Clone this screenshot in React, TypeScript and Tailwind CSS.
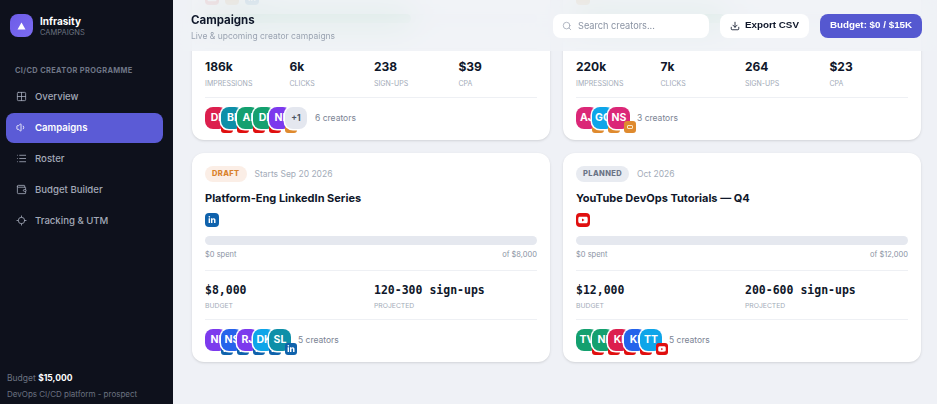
import { Download, Grid2x2, List, Locate, Search, Volume1, Wallet } from "lucide-react";
import { FaLinkedinIn, FaYoutube } from "react-icons/fa";

type Platform = "yt" | "li" | "nl";

type Creator = {
  initials: string;
  color: string;
  platform: Platform;
};

const navItems = [
  { label: "Overview", icon: Grid2x2 },
  { label: "Campaigns", icon: Volume1, active: true },
  { label: "Roster", icon: List },
  { label: "Budget Builder", icon: Wallet },
  { label: "Tracking & UTM", icon: Locate },
];

function PlatformIcon({ platform, small }: { platform: Platform; small?: boolean }) {
  const box = small ? "w-3 h-3 rounded-[3px]" : "w-3.5 h-3.5 rounded-[4px]";
  if (platform === "yt") {
    return (
      <span className={`${box} bg-[#e00f0f] flex items-center justify-center text-white`}>
        <FaYoutube className={small ? "w-2 h-2" : "w-2.5 h-2.5"} />
      </span>
    );
  }
  if (platform === "li") {
    return (
      <span className={`${box} bg-[#0f62ac] flex items-center justify-center text-white`}>
        <FaLinkedinIn className="w-2 h-2" />
      </span>
    );
  }
  return (
    <span className={`${box} bg-[#df8a2e] flex items-center justify-center`}>
      <span className="w-1.5 h-1 rounded-[1px] border border-[#fbe3c0]"></span>
    </span>
  );
}

function Avatars({ creators, extra, count }: { creators: Creator[]; extra?: string; count: number }) {
  return (
    <div className="flex items-center mt-[9px]">
      <div className="flex">
        {creators.map((c, i) => (
          <div key={i} className={`relative w-[22px] h-[22px] ${i > 0 ? "-ml-1.5" : ""}`}>
            <div
              className={`w-full h-full rounded-lg ring-[1.5px] ring-white flex items-center justify-center text-[10.5px] font-bold text-white ${c.color}`}
            >
              {c.initials}
            </div>
            <div className="absolute -right-1.5 -bottom-1 flex">
              <PlatformIcon platform={c.platform} small />
            </div>
          </div>
        ))}
        {extra && (
          <div className="relative -ml-1.5 w-[22px] h-[22px] rounded-lg ring-[1.5px] ring-white bg-[#e4e7ef] flex items-center justify-center text-[8.5px] font-bold text-[#4b5563]">
            {extra}
          </div>
        )}
      </div>
      <span className={`${extra ? "ml-2" : "ml-[7px]"} text-[8.5px] text-[#7b8494]`}>{count} creators</span>
    </div>
  );
}

function Stats({ stats }: { stats: [string, string][] }) {
  return (
    <div className="grid grid-cols-4 gap-1.5 mt-2.5">
      {stats.map(([value, label]) => (
        <div key={label}>
          <div className="text-[12px] leading-4 font-bold text-[#0f172a]">{value}</div>
          <div className="text-[7px] leading-[10px] mt-1 uppercase text-[#a3abb8]">{label}</div>
        </div>
      ))}
    </div>
  );
}

function LiveCard({
  platforms,
  fill,
  stats,
  creators,
  extra,
  count,
}: {
  platforms: Platform[];
  fill: string;
  stats: [string, string][];
  creators: Creator[];
  extra?: string;
  count: number;
}) {
  return (
    <div className="bg-white rounded-xl px-[13px] pt-[13px] pb-[11px] shadow-sm">
      <div className="flex gap-1.5">
        {platforms.map((p, i) => (
          <PlatformIcon key={i} platform={p} />
        ))}
      </div>
      <div className="mt-[9px] h-[9px] rounded-full bg-[#e5e8ef] overflow-hidden">
        <div className={`h-full bg-[#16a34a] rounded-full ${fill}`}></div>
      </div>
      <div className="mt-[5px] h-2.5"></div>
      <div className="mt-2.5 h-px bg-[#eef0f4]"></div>
      <Stats stats={stats} />
      <div className="mt-2 h-px bg-[#eef0f4]"></div>
      <Avatars creators={creators} extra={extra} count={count} />
    </div>
  );
}

function PlannedCard({
  status,
  statusClass,
  date,
  title,
  platform,
  budget,
  projected,
  creators,
}: {
  status: string;
  statusClass: string;
  date: string;
  title: string;
  platform: Platform;
  budget: string;
  projected: string;
  creators: Creator[];
}) {
  return (
    <div className="bg-white rounded-xl px-[13px] pt-[13px] pb-[11px] shadow-sm">
      <div className="flex items-center gap-2">
        <span className={`h-4 px-[7px] rounded-full flex items-center text-[7.5px] font-extrabold tracking-wider ${statusClass}`}>
          {status}
        </span>
        <span className="text-[8.5px] text-[#a3abb8]">{date}</span>
      </div>
      <div className="mt-2 text-[11px] leading-4 font-bold text-[#0f172a]">{title}</div>
      <div className="mt-[7px] flex">
        <PlatformIcon platform={platform} />
      </div>
      <div className="mt-[9px] h-[9px] rounded-full bg-[#e5e8ef]"></div>
      <div className="mt-[5px] flex justify-between text-[7.5px] leading-[10px] text-[#8a93a3]">
        <span>$0 spent</span>
        <span>of {budget}</span>
      </div>
      <div className="mt-2.5 h-px bg-[#eef0f4]"></div>
      <div className="grid grid-cols-2 gap-1.5 mt-[11px]">
        <div>
          <div className="text-[11.5px] leading-4 font-bold text-[#0f172a] font-['DejaVu_Sans_Mono',monospace]">{budget}</div>
          <div className="text-[6.8px] leading-[10px] mt-[3px] uppercase text-[#a3abb8]">Budget</div>
        </div>
        <div>
          <div className="text-[11.5px] leading-4 font-bold text-[#0f172a] font-['DejaVu_Sans_Mono',monospace]">{projected}</div>
          <div className="text-[6.8px] leading-[10px] mt-[3px] uppercase text-[#a3abb8]">Projected</div>
        </div>
      </div>
      <div className="mt-2 h-px bg-[#eef0f4]"></div>
      <Avatars creators={creators} count={creators.length} />
    </div>
  );
}

export default function App() {
  return (
    <div className="flex h-screen overflow-hidden bg-[#eff1f6] font-['Inter',sans-serif]">
      {/* Sidebar */}
      <aside className="w-[173px] shrink-0 bg-[#0e111c] flex flex-col">
        <div className="flex items-center gap-[7px] pl-2.5 pt-[13px]">
          <div className="w-[23px] h-[23px] rounded-lg bg-gradient-to-br from-[#6d5ce8] to-[#7c6cf0] flex items-center justify-center">
            <svg width="9" height="8" viewBox="0 0 10 9">
              <polygon points="5,0.5 9.5,8.5 0.5,8.5" fill="#fff" />
            </svg>
          </div>
          <div className="pt-0.5">
            <div className="text-[10px] leading-3 font-bold text-white">Infrasity</div>
            <div className="text-[7.5px] leading-[10px] mt-px text-[#6b7280]">CAMPAIGNS</div>
          </div>
        </div>
        <div className="pl-[15px] mt-7 text-[7.4px] leading-[10px] font-bold tracking-wider text-[#6f7686]">
          CI/CD CREATOR PROGRAMME
        </div>
        <nav className="mt-1.5 pl-1.5 pr-2.5 flex flex-col gap-px">
          {navItems.map((item) => {
            const Icon = item.icon;
            return (
              <div
                key={item.label}
                className={`h-[30px] rounded-lg pl-2.5 flex items-center gap-[8px] text-[9.6px] font-medium ${
                  item.active ? "bg-[#5b5bd6] text-white font-semibold" : "text-[#a3a9b8]"
                }`}
              >
                <Icon className="w-[11px] h-[11px] -mt-0.5" strokeWidth={1.8} />
                <span>{item.label}</span>
              </div>
            );
          })}
        </nav>
        <div className="mt-auto pl-[7px] pb-[2px]">
          <div className="text-[8.5px] leading-[15px] text-[#6b7280]">
            Budget <span className="font-bold text-white">$15,000</span>
          </div>
          <div className="text-[8px] leading-[15px] mt-px text-[#6b7280]">DevOps CI/CD platform - prospect</div>
        </div>
      </aside>

      {/* Main */}
      <main className="relative flex-1 overflow-hidden">
        <header className="absolute top-0 inset-x-0 z-10 h-[51px] bg-[#eff1f6]/85 backdrop-blur-lg pl-[18px] pr-[15px] flex items-center justify-between">
          <div className="pt-[3px]">
            <div className="text-[11.5px] leading-4 font-bold text-[#0f172a]">Campaigns</div>
            <div className="text-[8.5px] leading-3 mt-0.5 text-[#9aa3b1]">Live &amp; upcoming creator campaigns</div>
          </div>
          <div className="flex items-center gap-[11px]">
            <div className="w-[156px] h-6 bg-white rounded-lg pl-[9px] flex items-center gap-1.5 text-[9.2px] text-[#8a93a3]">
              <Search className="w-2.5 h-2.5 text-[#a3abb8]" />
              <span>Search creators...</span>
            </div>
            <div className="w-[89px] h-6 bg-white rounded-lg flex items-center justify-center gap-[5px] text-[9.8px] font-semibold text-[#0f172a] font-['Liberation_Sans',sans-serif]">
              <Download className="w-2.5 h-2.5" />
              <span>Export CSV</span>
            </div>
            <div className="w-[102px] h-6 bg-[#5558d0] rounded-lg flex items-center justify-center text-[9.8px] font-bold text-white font-['Liberation_Sans',sans-serif]">
              Budget: $0 / $15K
            </div>
          </div>
        </header>

        <div className="-mt-[22px] pl-[19px] pr-4 grid grid-cols-2 gap-[13px]">
          <LiveCard
            platforms={["yt", "nl", "li"]}
            fill="w-[62%]"
            stats={[
              ["186k", "Impressions"],
              ["6k", "Clicks"],
              ["238", "Sign-ups"],
              ["$39", "CPA"],
            ]}
            creators={[
              { initials: "DI", color: "bg-[#dc1f4e]", platform: "yt" },
              { initials: "BI", color: "bg-[#0e8fa8]", platform: "yt" },
              { initials: "AI", color: "bg-[#14a06f]", platform: "yt" },
              { initials: "DI", color: "bg-[#14a06f]", platform: "yt" },
              { initials: "NI", color: "bg-[#7c3aed]", platform: "nl" },
            ]}
            extra="+1"
            count={6}
          />
          <LiveCard
            platforms={["nl"]}
            fill="w-[45%]"
            stats={[
              ["220k", "Impressions"],
              ["7k", "Clicks"],
              ["264", "Sign-ups"],
              ["$23", "CPA"],
            ]}
            creators={[
              { initials: "AJ", color: "bg-[#db2777]", platform: "nl" },
              { initials: "GO", color: "bg-[#0ea5e9]", platform: "nl" },
              { initials: "NS", color: "bg-[#db2777]", platform: "nl" },
            ]}
            count={3}
          />
          <PlannedCard
            status="DRAFT"
            statusClass="bg-[#fbeee6] text-[#d9822b]"
            date="Starts Sep 20 2026"
            title="Platform-Eng LinkedIn Series"
            platform="li"
            budget="$8,000"
            projected="120-300 sign-ups"
            creators={[
              { initials: "NI", color: "bg-[#7c3aed]", platform: "li" },
              { initials: "NS", color: "bg-[#2563eb]", platform: "li" },
              { initials: "RJ", color: "bg-[#7c3aed]", platform: "li" },
              { initials: "DK", color: "bg-[#0ea5e9]", platform: "li" },
              { initials: "SL", color: "bg-[#0e8fa8]", platform: "li" },
            ]}
          />
          <PlannedCard
            status="PLANNED"
            statusClass="bg-[#e8ebf1] text-[#6b7486]"
            date="Oct 2026"
            title="YouTube DevOps Tutorials — Q4"
            platform="yt"
            budget="$12,000"
            projected="200-600 sign-ups"
            creators={[
              { initials: "TV", color: "bg-[#14a06f]", platform: "yt" },
              { initials: "NI", color: "bg-[#14a06f]", platform: "yt" },
              { initials: "KI", color: "bg-[#dc1f4e]", platform: "yt" },
              { initials: "KI", color: "bg-[#2563eb]", platform: "yt" },
              { initials: "TT", color: "bg-[#0ea5e9]", platform: "yt" },
            ]}
          />
        </div>
      </main>
    </div>
  );
}
